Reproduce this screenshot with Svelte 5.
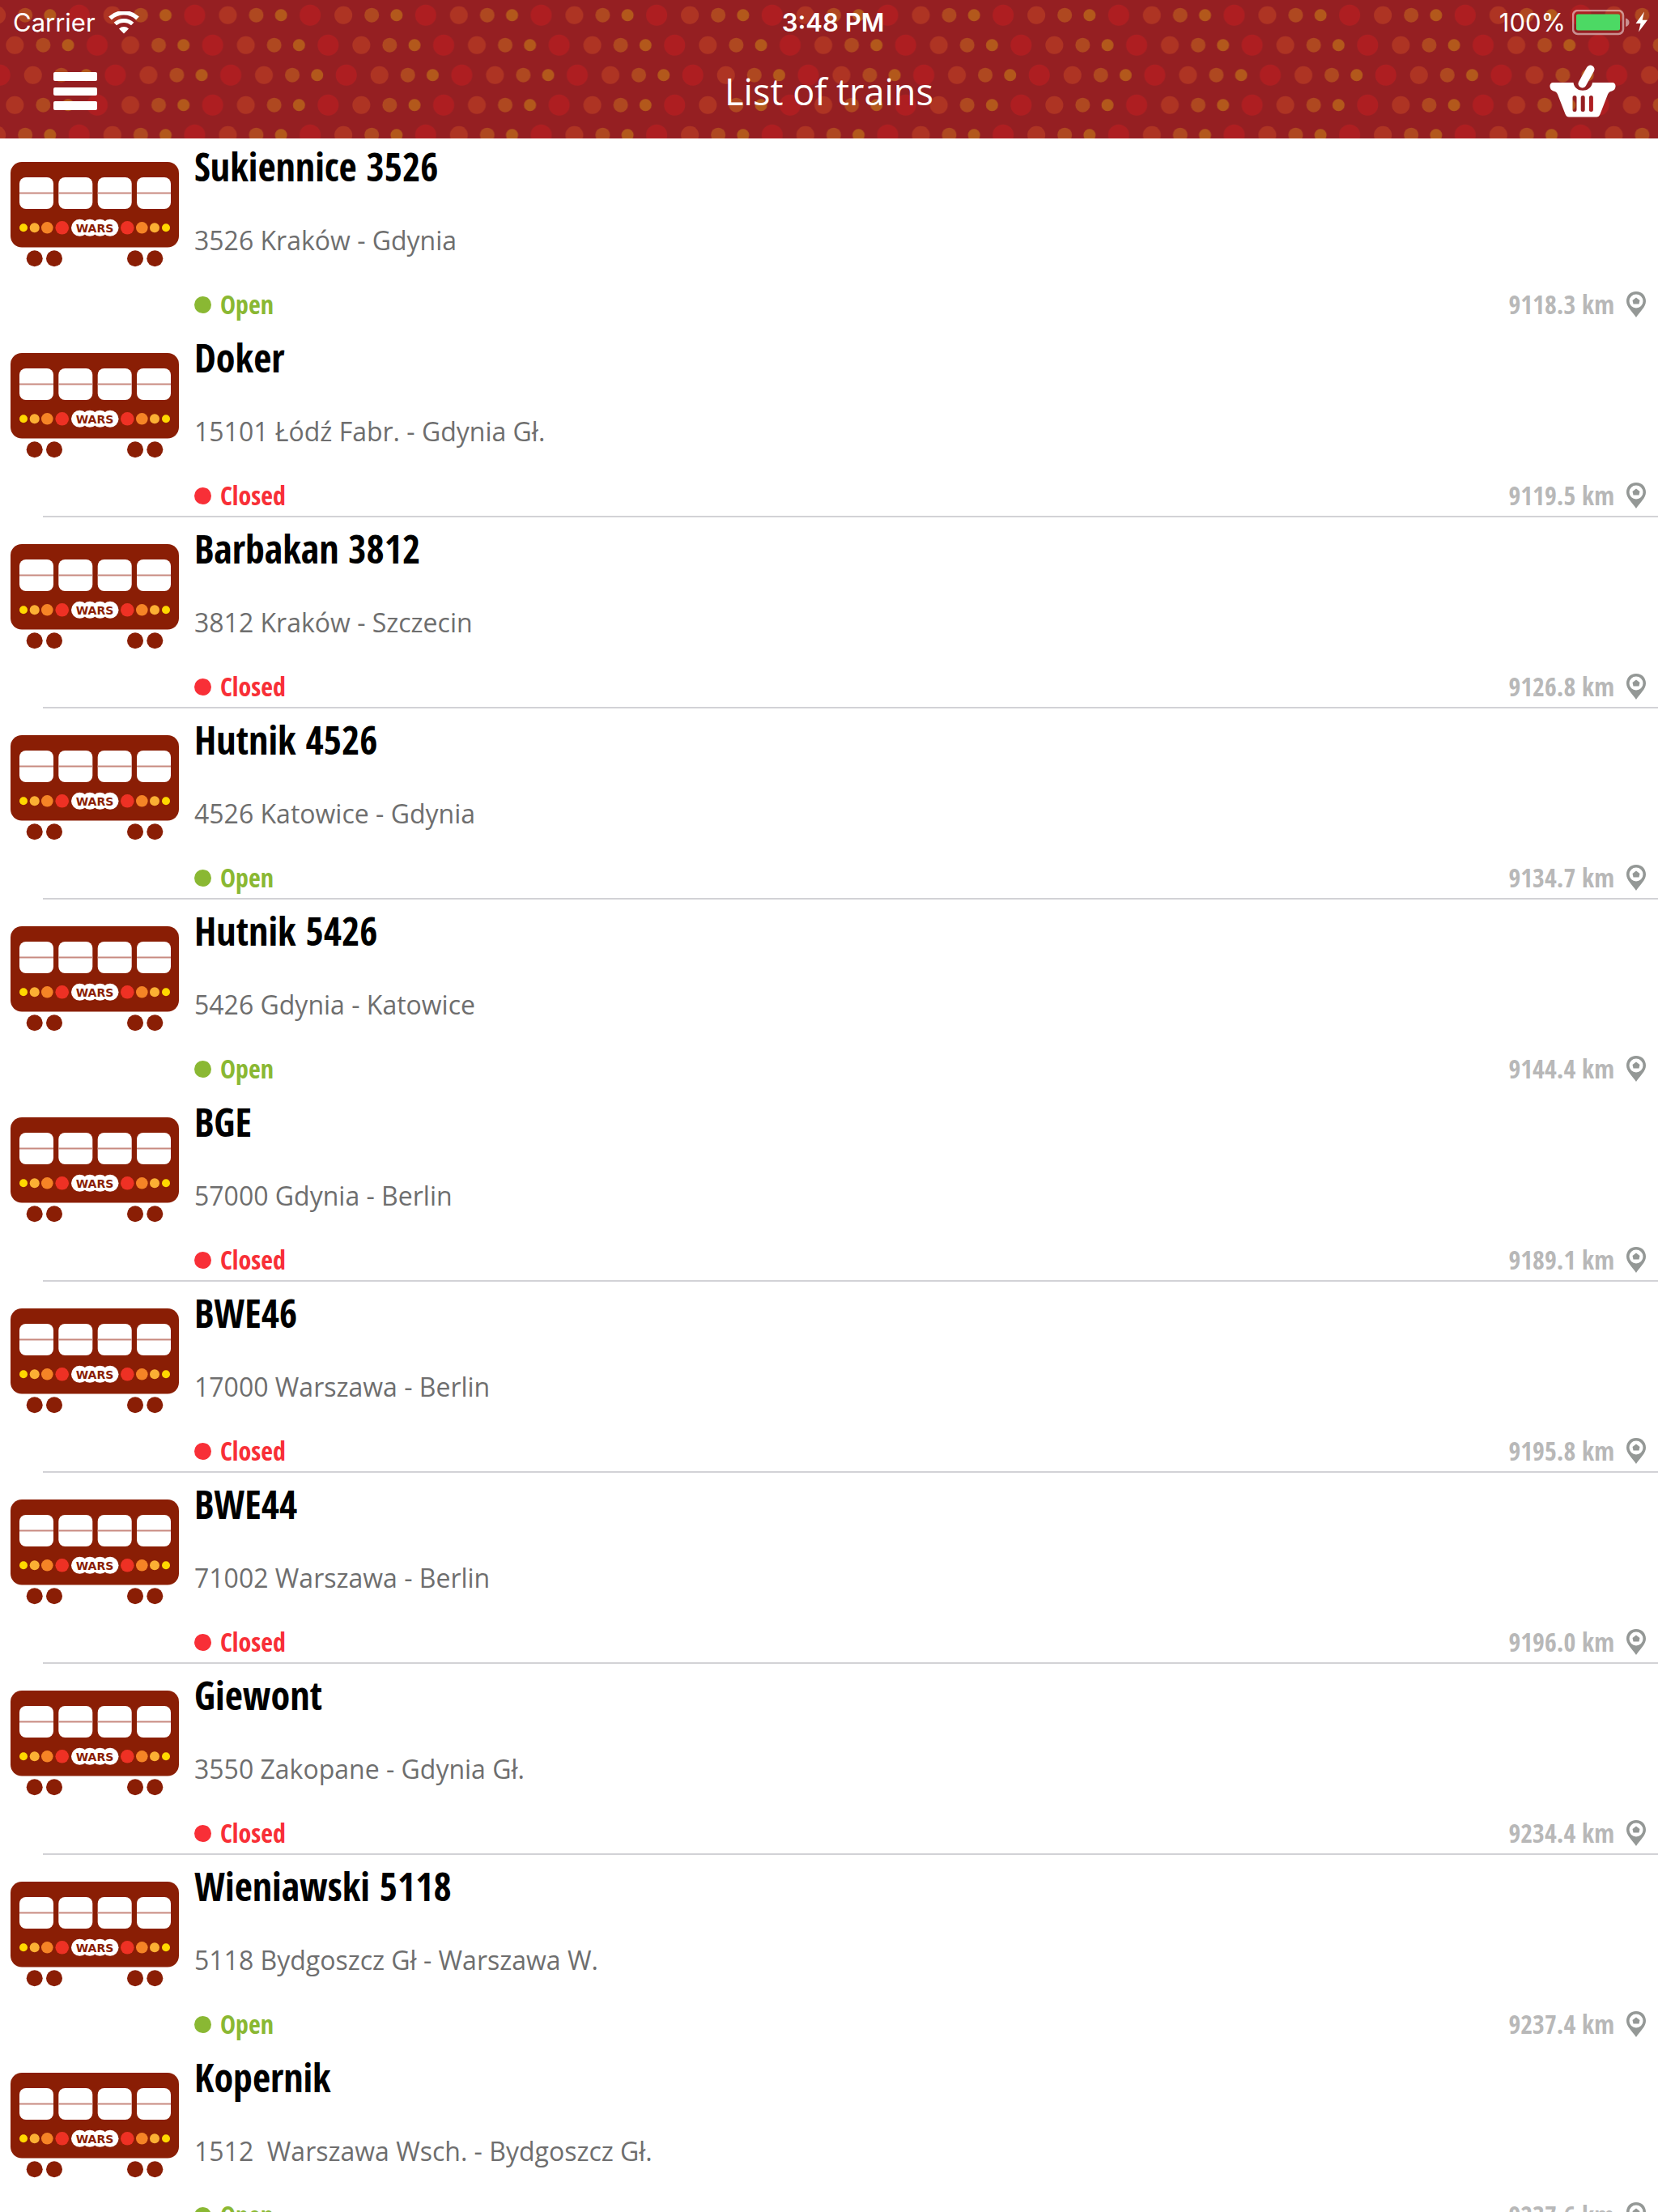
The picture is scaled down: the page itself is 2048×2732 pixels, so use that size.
<script>
    let title = "List of trains";

    let trains = [
        { name: "Sukiennice 3526", route: "3526 Kraków - Gdynia", open: true, distance: "9118.3 km", line: false },
        { name: "Doker", route: "15101 Łódź Fabr. - Gdynia Gł.", open: false, distance: "9119.5 km", line: true },
        { name: "Barbakan 3812", route: "3812 Kraków - Szczecin", open: false, distance: "9126.8 km", line: true },
        { name: "Hutnik 4526", route: "4526 Katowice - Gdynia", open: true, distance: "9134.7 km", line: true },
        { name: "Hutnik 5426", route: "5426 Gdynia - Katowice", open: true, distance: "9144.4 km", line: false },
        { name: "BGE", route: "57000 Gdynia - Berlin", open: false, distance: "9189.1 km", line: true },
        { name: "BWE46", route: "17000 Warszawa - Berlin", open: false, distance: "9195.8 km", line: true },
        { name: "BWE44", route: "71002 Warszawa - Berlin", open: false, distance: "9196.0 km", line: true },
        { name: "Giewont", route: "3550 Zakopane - Gdynia Gł.", open: false, distance: "9234.4 km", line: true },
        { name: "Wieniawski 5118", route: "5118 Bydgoszcz Gł - Warszawa W.", open: true, distance: "9237.4 km", line: false },
        { name: "Kopernik", route: "1512  Warszawa Wsch. - Bydgoszcz Gł.", open: true, distance: "9237.6 km", line: false },
    ];

    // header dots, four rows that repeat
    const step = 142.667;
    const dotRows = [
        { x: 97.8, y: 18.7 },
        { x: 120, y: 55.7 },
        { x: 142.4, y: 92.7 },
        { x: 120, y: 129.7 },
    ];
    const dots = [
        { dx: 0, r: 13, color: "#ae1e21" },
        { dx: 41, r: 11, color: "#ae3423" },
        { dx: 76, r: 9, color: "#af4820" },
        { dx: 106.7, r: 7.5, color: "#b3581b" },
    ];

    const windows = [11, 59.3, 107.7, 156];
    const lamps = [
        { x: 16, r: 5, color: "#ffd800" },
        { x: 29.7, r: 6, color: "#fbb034" },
        { x: 45.3, r: 7.3, color: "#f58426" },
        { x: 63.7, r: 8.3, color: "#ee3124" },
        { x: 144.3, r: 8.3, color: "#ee3124" },
        { x: 162.3, r: 7.3, color: "#f58426" },
        { x: 178, r: 6, color: "#fbb034" },
        { x: 192, r: 5, color: "#ffd800" },
    ];
    const wheels = [29.7, 54, 154, 178.3];
    const badge = [85.5, 98, 110.5, 123];
</script>

<div class="screen">
    <header>
        <svg class="dots" aria-hidden="true">
            <defs>
                <pattern id="dots" width={step} height="148" patternUnits="userSpaceOnUse">
                    {#each dotRows as row}
                        {#each dots as dot}
                            {#each [-2, -1, 0] as shift}
                                <circle cx={row.x + dot.dx + shift * step} cy={row.y} r={dot.r} fill={dot.color} />
                            {/each}
                        {/each}
                    {/each}
                </pattern>
            </defs>
            <rect width="100%" height="100%" fill="url(#dots)" />
        </svg>

        <div class="status-bar">
            <div class="carrier">
                <span>Carrier</span>
                <svg width="38" height="28" viewBox="0 0 38 28" fill="none" stroke="#fff" aria-hidden="true">
                    <path d="M2 8.500a25 25 0 0 1 34 0" stroke-width="5.500" />
                    <path d="M8.300 15.500a16 16 0 0 1 21.400 0" stroke-width="5" />
                    <path d="M13 21.500a8.600 8.600 0 0 1 12 0L19 27.500z" fill="#fff" stroke="none" />
                </svg>
            </div>
            <div class="clock">3:48 PM</div>
            <div class="battery">
                <span>100%</span>
                <svg width="94" height="32" viewBox="0 0 94 32" aria-hidden="true">
                    <rect x="1" y="1" width="62" height="29" rx="6" fill="none" stroke="#fff" stroke-opacity="0.500" stroke-width="2.500" />
                    <rect x="5" y="5.500" width="54" height="20" rx="2" fill="#4cd964" />
                    <path d="M66 10.500c6 1.500 6 9 0 10.500z" fill="#fff" fill-opacity="0.500" />
                    <path d="M89 2.500 78.500 17h6L82 27.500 93 12.800h-6.300z" fill="#fff" />
                </svg>
            </div>
        </div>

        <nav>
            <button class="menu" aria-label="Menu">
                <svg width="54" height="48" viewBox="0 0 54 48" fill="#fff" aria-hidden="true">
                    <rect y="0" width="54" height="11" rx="2" />
                    <rect y="19" width="54" height="10" rx="2" />
                    <rect y="36" width="54" height="11" rx="2" />
                </svg>
            </button>
            <h1>{title}</h1>
            <button class="basket" aria-label="Basket">
                <svg width="82" height="65" viewBox="0 0 82 65" aria-hidden="true">
                    <path
                        fill="#fff"
                        fill-rule="evenodd"
                        d="M4.500 22H29.500C31 35 51 35 53 22H77.500C83 22 83 31 77 32.500Q73.500 33 72 36.500L62.500 61Q61 64.500 58 64.500H24Q21 64.500 19.500 61L10 36.500Q8.500 33 5 32.500C-1 31 -1 22 4.500 22zM28.500 40.500V55.500a2.500 2.500 0 0 0 5 0V40.500a2.500 2.500 0 0 0-5 0zM38.700 40.500V55.500a2.500 2.500 0 0 0 5 0V40.500a2.500 2.500 0 0 0-5 0zM48.900 40.500V55.500a2.500 2.500 0 0 0 5 0V40.500a2.500 2.500 0 0 0-5 0z"
                    />
                    <path d="M40.500 23.500 50.500 5.500" stroke="#fff" stroke-width="10" stroke-linecap="round" />
                </svg>
            </button>
        </nav>
    </header>

    <ul class="trains">
        {#each trains as train}
            <li class:line={train.line}>
                <a href="#train">
                    <svg class="wagon" width="209" height="130" viewBox="0 0 209 130" aria-hidden="true">
                        <rect width="208" height="105.500" rx="14" fill="#8a1e05" />
                        {#each windows as x}
                            <rect {x} y="19" width="42" height="39" rx="8" fill="#fff" />
                            <rect {x} y="37.500" width="42" height="2" fill="#c88a80" />
                        {/each}
                        {#each lamps as lamp}
                            <circle cx={lamp.x} cy="81.300" r={lamp.r} fill={lamp.color} />
                        {/each}
                        {#each badge as x}
                            <circle cx={x} cy="81.300" r="10.500" fill="#fff" />
                        {/each}
                        <text x="104" y="86.500" text-anchor="middle" class="wars">WARS</text>
                        {#each wheels as x}
                            <circle cx={x} cy="119.300" r="10" fill="#8a1e05" />
                        {/each}
                    </svg>
                    <div class="info">
                        <h2>{train.name}</h2>
                        <p class="route">{train.route}</p>
                        <div class="bottom">
                            <span class="state" class:open={train.open}>{train.open ? "Open" : "Closed"}</span>
                            <span class="distance">
                                {train.distance}
                                <svg width="26" height="34" viewBox="0 0 26 34" aria-hidden="true">
                                    <path
                                        fill="#949896"
                                        fill-rule="evenodd"
                                        d="M13 1C5.500 1 1 6.500 1 13c0 7 7 12.500 12 20 5-7.500 12-13 12-20C25 6.500 20.500 1 13 1zM13 4.500a8.500 8.500 0 1 1 0 17 8.500 8.500 0 0 1 0-17z"
                                    />
                                    <path d="M13 8.500 17.500 12 16.500 16.500H9.500L8.500 12z" fill="#949896" />
                                </svg>
                            </span>
                        </div>
                    </div>
                </a>
            </li>
        {/each}
    </ul>
</div>

<style>
    :global(body) {
        background: #fff;
    }

    .screen {
        display: flex;
        flex-direction: column;
        height: 100vh;
        overflow: hidden;
        font-family: "Open Sans", "Noto Sans", sans-serif;
    }

    header {
        position: relative;
        z-index: 1;
        flex: none;
        height: 171px;
        background: #951f22;
        color: #fff;
    }

    .dots {
        position: absolute;
        inset: 0;
        width: 100%;
        height: 100%;
    }

    .status-bar {
        position: relative;
        display: grid;
        grid-template-columns: 1fr auto 1fr;
        align-items: center;
        height: 55px;
        padding: 0 12px 0 16px;
        font-family: Inter, "Liberation Sans", sans-serif;
        font-size: 31px;
    }

    .carrier,
    .battery {
        display: flex;
        align-items: center;
        gap: 16px;
    }

    .battery {
        justify-content: flex-end;
        gap: 8px;
    }

    .clock {
        padding-left: 6px;
        font-weight: 600;
    }

    nav {
        position: relative;
        display: grid;
        grid-template-columns: 1fr auto 1fr;
        align-items: center;
        height: 115px;
        padding: 0 52px;
    }

    nav button {
        display: flex;
        padding: 0;
        border: none;
        background: none;
        cursor: pointer;
    }

    .menu {
        justify-self: start;
        margin-left: 14px;
    }

    .basket {
        justify-self: end;
    }

    h1 {
        margin: 0;
        font-size: 45px;
        font-weight: 400;
        line-height: 64px;
    }

    .trains {
        margin: -4px 0 0;
        padding: 0;
        list-style: none;
    }

    li {
        position: relative;
    }

    li.line::after {
        content: "";
        position: absolute;
        left: 53px;
        right: 0;
        bottom: 0;
        height: 2px;
        background: #d2d2d6;
    }

    a {
        display: flex;
        gap: 18px;
        height: 236px;
        padding: 0 14px 0 13px;
        box-sizing: border-box;
        color: #000;
        text-decoration: none;
    }

    .wagon {
        flex: none;
        margin-top: 33px;
    }

    .wars {
        font-family: "DejaVu Sans", sans-serif;
        font-size: 14px;
        font-weight: 700;
        fill: #8a1e05;
    }

    .info {
        flex: 1;
        padding-top: 7px;
    }

    h2 {
        margin: 0;
        font-family: "Open Sans Condensed", "Noto Sans Condensed", "Open Sans", sans-serif;
        font-size: 48px;
        font-weight: 700;
        line-height: 64px;
    }

    .route {
        margin: 37px 0;
        color: #6e6e6e;
        font-size: 32px;
        line-height: 44px;
        white-space: pre;
    }

    .bottom {
        display: flex;
        justify-content: space-between;
        align-items: center;
        font-family: "Open Sans Condensed", "Noto Sans Condensed", "Open Sans", sans-serif;
        font-size: 32px;
        font-weight: 700;
        line-height: 40px;
    }

    .state {
        display: flex;
        align-items: center;
        gap: 11px;
        color: #f82f37;
    }

    .state::before {
        content: "";
        width: 21px;
        height: 21px;
        border-radius: 50%;
        background: currentColor;
    }

    .state.open {
        color: #8ab833;
    }

    .distance {
        display: flex;
        align-items: center;
        gap: 14px;
        color: #b8b8b8;
    }
</style>
